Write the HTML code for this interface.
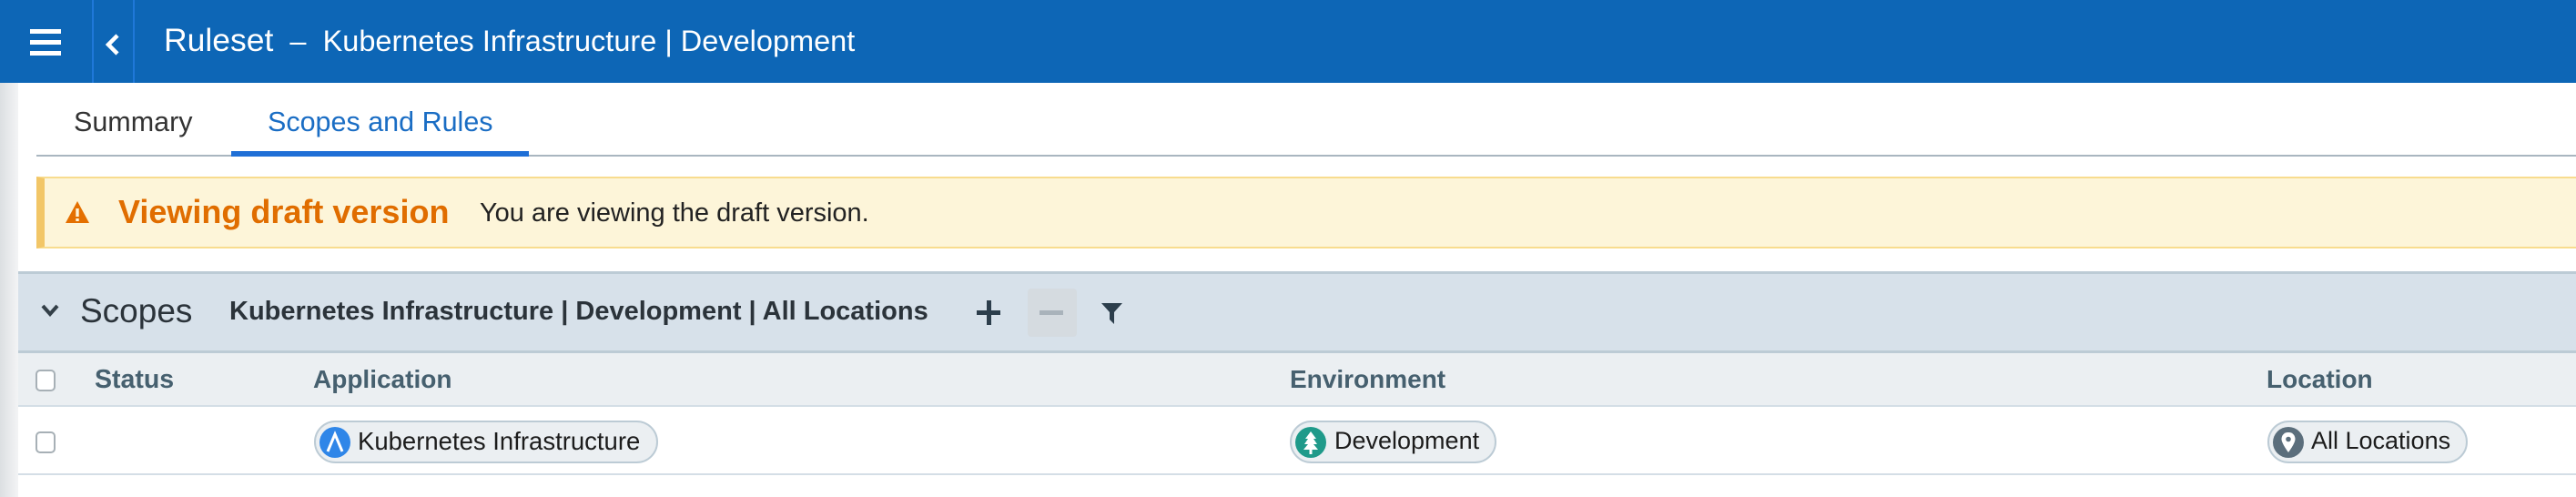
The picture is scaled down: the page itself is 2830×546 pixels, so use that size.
<!DOCTYPE html>
<html><head><meta charset="utf-8"><style>
*{margin:0;padding:0;box-sizing:border-box}
body{width:2830px;height:546px;overflow:hidden;background:#fff;font-family:"Liberation Sans",sans-serif;position:relative}
.abs{position:absolute}
.hdr{left:0;top:0;width:2830px;height:91px;background:#0d66b6}
.side{left:0;top:91px;width:20px;height:455px;background:linear-gradient(to right,#dcdfe2,#f3f4f5)}
.t{position:absolute;white-space:nowrap}
</style></head><body>
<div class="abs hdr"></div>
<div class="abs" style="left:101px;top:0;width:2px;height:91px;background:#1f78d8"></div>
<div class="abs" style="left:146px;top:0;width:2px;height:91px;background:#1f78d8"></div>
<div class="abs" style="left:33px;top:32px;width:34px;height:5px;background:#fff"></div>
<div class="abs" style="left:33px;top:44px;width:34px;height:5px;background:#fff"></div>
<div class="abs" style="left:33px;top:56px;width:34px;height:5px;background:#fff"></div>
<svg class="abs" style="left:114px;top:36px" width="20" height="26"><path d="M15 3 L5 13 L15 23" stroke="#fff" stroke-width="4.5" fill="none"/></svg>
<div class="t" style="left:180px;top:24px;font-size:35.5px;color:#fff">Ruleset<span style="font-size:32.5px">&nbsp; – &nbsp;Kubernetes Infrastructure | Development</span></div>
<div class="abs side"></div>

<div class="t" style="left:81px;top:117px;font-size:30.5px;color:#333">Summary</div>
<div class="t" style="left:294px;top:117px;font-size:30.5px;color:#1a6dc4">Scopes and Rules</div>
<div class="abs" style="left:40px;top:170px;width:2790px;height:2px;background:#a9b6c0"></div>
<div class="abs" style="left:254px;top:166px;width:327px;height:6px;background:#1f6fd6"></div>

<div class="abs" style="left:40px;top:194px;width:2790px;height:79px;background:#fdf5d9;border-top:2px solid #f8dc8e;border-bottom:2px solid #f8dc8e;border-left:9px solid #f2c667"></div>
<svg class="abs" style="left:71px;top:220px" width="28" height="26"><path d="M14 1 L27 25 L1 25 Z" fill="#e46f00"/><rect x="12.3" y="9" width="3.4" height="9" fill="#fdf5d9"/><rect x="12.3" y="20" width="3.4" height="3" fill="#fdf5d9"/></svg>
<div class="t" style="left:130px;top:212px;font-size:36px;font-weight:bold;color:#e06d00">Viewing draft version</div>
<div class="t" style="left:527px;top:218px;font-size:29px;color:#222">You are viewing the draft version.</div>

<div class="abs" style="left:20px;top:298px;width:2810px;height:90px;background:#d7e1ea;border-top:3px solid #bccbd5;border-bottom:3px solid #bccbd5"></div>
<svg class="abs" style="left:44px;top:333px" width="22" height="16"><path d="M3 3 L11 12 L19 3" stroke="#333f48" stroke-width="4" fill="none"/></svg>
<div class="t" style="left:88px;top:321px;font-size:37px;color:#2b333a">Scopes</div>
<div class="t" style="left:252px;top:326px;font-size:29px;font-weight:bold;color:#2b333a">Kubernetes Infrastructure | Development | All Locations</div>
<div class="abs" style="left:1073px;top:341px;width:26px;height:5px;background:#2c3e4c"></div>
<div class="abs" style="left:1083.5px;top:330px;width:5px;height:27px;background:#2c3e4c"></div>
<div class="abs" style="left:1129px;top:317px;width:54px;height:53px;background:#d5dbe0;border-radius:4px"></div>
<div class="abs" style="left:1142px;top:341px;width:26px;height:5px;background:#a9b3bb"></div>
<svg class="abs" style="left:1210px;top:333px" width="24" height="24"><path d="M0 0 H23 L14 10 V23 L9 18 V10 Z" fill="#2c3e4c"/></svg>

<div class="abs" style="left:20px;top:388px;width:2810px;height:59px;background:#ebeff2;border-bottom:2px solid #d4dee6"></div>
<div class="abs" style="left:39px;top:406px;width:22px;height:24px;border:2px solid #a7b0b6;border-radius:5px;background:#fff"></div>
<div class="t" style="left:104px;top:401px;font-size:28.5px;font-weight:bold;color:#46606f">Status</div>
<div class="t" style="left:344px;top:401px;font-size:28px;font-weight:bold;color:#46606f">Application</div>
<div class="t" style="left:1417px;top:401px;font-size:28px;font-weight:bold;color:#46606f">Environment</div>
<div class="t" style="left:2490px;top:401px;font-size:28px;font-weight:bold;color:#46606f">Location</div>

<div class="abs" style="left:20px;top:520px;width:2810px;height:2px;background:#d4dee6"></div>
<div class="abs" style="left:39px;top:474px;width:22px;height:24px;border:2px solid #a7b0b6;border-radius:5px;background:#fff"></div>

<div class="abs" style="left:345px;top:462px;width:378px;height:47px;border:2px solid #bccbd5;border-radius:24px;background:#ebeff2"></div>
<svg class="abs" style="left:350px;top:468px" width="36" height="36"><circle cx="18" cy="18" r="17" fill="#2f86e8"/><path d="M10 28 L18 9 L26 28" stroke="#fff" stroke-width="3" fill="none"/></svg>
<div class="t" style="left:393px;top:469px;font-size:27.5px;color:#1c1c1c">Kubernetes Infrastructure</div>

<div class="abs" style="left:1417px;top:462px;width:227px;height:47px;border:2px solid #bccbd5;border-radius:24px;background:#ebeff2"></div>
<svg class="abs" style="left:1422px;top:468px" width="36" height="36"><circle cx="18" cy="18" r="17" fill="#1f9a8a"/><path d="M18 6 L12 14 H15 L11 20 H15 L10 26 H16.5 V31 H19.5 V26 H26 L21 20 H25 L21 14 H24 Z" fill="#fff"/></svg>
<div class="t" style="left:1466px;top:469px;font-size:27px;color:#1c1c1c">Development</div>

<div class="abs" style="left:2491px;top:462px;width:220px;height:47px;border:2px solid #bccbd5;border-radius:24px;background:#ebeff2"></div>
<svg class="abs" style="left:2496px;top:468px" width="36" height="36"><circle cx="18" cy="18" r="17" fill="#5b6e7c"/><path d="M18 7 C12.5 7 10.5 11 10.5 14.5 C10.5 19 18 29 18 29 C18 29 25.5 19 25.5 14.5 C25.5 11 23.5 7 18 7 Z" fill="#fff"/><circle cx="18" cy="14.5" r="2.8" fill="#5b6e7c"/></svg>
<div class="t" style="left:2539px;top:469px;font-size:27px;color:#1c1c1c">All Locations</div>
</body></html>
